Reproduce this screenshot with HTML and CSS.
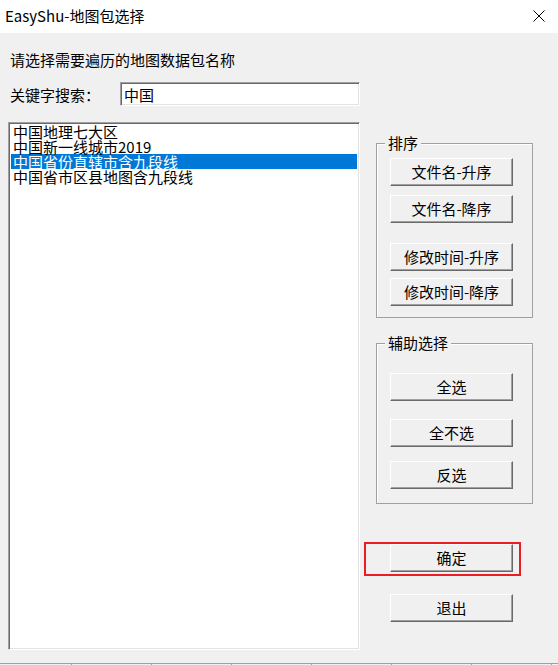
FILE: index.html
```html
<!DOCTYPE html>
<html lang="zh-CN">
<head>
    <meta charset="UTF-8">
    <meta name="viewport" content="width=device-width, initial-scale=1.0">
    <title>EasyShu-地图包选择</title>
    <link rel="stylesheet" href="styles.css">
</head>
<body>

    <div class="window">
        <div class="titlebar">
            <span class="title-text">EasyShu-地图包选择</span>
            <svg class="close-icon" width="12" height="12" viewBox="0 0 12 12">
                <path d="M0.5 0.5 L11.5 11.5 M11.5 0.5 L0.5 11.5" stroke="#000" stroke-width="1" fill="none"/>
            </svg>
        </div>

        <div class="content">
            <div class="prompt">请选择需要遍历的地图数据包名称</div>

            <div class="search-row">
                <label for="keyword" class="search-label">关键字搜索：</label>
                <input type="text" id="keyword" class="search-input" value="中国">
            </div>

            <div class="main-row">
                <ul class="listbox" id="mapList">
                    <li>中国地理七大区</li>
                    <li>中国新一线城市2019</li>
                    <li class="selected">中国省份直辖市含九段线</li>
                    <li>中国省市区县地图含九段线</li>
                </ul>

                <div class="side">
                    <div class="group group-sort">
                        <span class="group-title">排序</span>
                        <button class="btn">文件名-升序</button>
                        <button class="btn gap-9">文件名-降序</button>
                        <button class="btn gap-20">修改时间-升序</button>
                        <button class="btn gap-7">修改时间-降序</button>
                    </div>

                    <div class="group group-help">
                        <span class="group-title">辅助选择</span>
                        <button class="btn">全选</button>
                        <button class="btn gap-18">全不选</button>
                        <button class="btn gap-14">反选</button>
                    </div>

                    <div class="confirm-wrap">
                        <button class="btn">确定</button>
                    </div>

                    <button class="btn btn-exit">退出</button>
                </div>
            </div>
        </div>

        <div class="statusbar">
            <span class="seg seg-first"></span>
            <span class="seg"></span>
            <span class="seg"></span>
            <span class="seg"></span>
            <span class="seg"></span>
            <span class="seg"></span>
            <span class="seg"></span>
        </div>
    </div>

</body>
</html>
```

FILE: styles.css
```css
* {
    box-sizing: border-box;
}
body {
    margin: 0;
    font-family: "Noto Sans CJK SC", "Liberation Sans", sans-serif;
    font-size: 15px;
    color: #000;
    background-color: #f0f0f0;
    overflow: hidden;
}
.window {
    width: 558px;
    height: 665px;
    display: flex;
    flex-direction: column;
}
.titlebar {
    height: 33px;
    background-color: #fff;
    display: flex;
    align-items: center;
    justify-content: space-between;
    padding: 0 13px 2px 5px;
    flex-shrink: 0;
}
.title-text {
    font-size: 15px;
}
.content {
    flex: 1;
    display: flex;
    flex-direction: column;
    padding-top: 17px;
}
.prompt {
    line-height: 20px;
    height: 20px;
    padding-left: 10px;
}
.search-row {
    display: flex;
    align-items: center;
    margin-top: 12px;
    height: 24px;
}
.search-label {
    width: 120px;
    padding-left: 10px;
}
.search-input {
    width: 240px;
    height: 24px;
    font-family: inherit;
    font-size: 15px;
    padding: 0 3px;
    border: 1px solid;
    border-color: #a0a0a0 #fff #fff #a0a0a0;
    box-shadow: inset 1px 1px 0 #696969, inset -1px -1px 0 #e3e3e3;
    background: #fff;
    outline: none;
}
.main-row {
    display: flex;
    margin-top: 16px;
}
.listbox {
    list-style: none;
    margin: 0 0 0 8px;
    padding: 1px 2px;
    width: 352px;
    height: 528px;
    background: #fff;
    border: 1px solid;
    border-color: #a0a0a0 #fff #fff #a0a0a0;
    box-shadow: inset 1px 1px 0 #696969, inset -1px -1px 0 #e3e3e3;
}
.listbox li {
    height: 15px;
    line-height: 15px;
    padding-left: 2px;
    font-size: 15px;
    white-space: nowrap;
}
.listbox li.selected {
    background-color: #0078d7;
    color: #fff;
}
.side {
    display: flex;
    flex-direction: column;
    margin-left: 4px;
}
.group {
    position: relative;
    margin-left: 12px;
    width: 157px;
    border: 1px solid #a0a0a0;
    box-shadow: inset 1px 1px 0 #fff;
    padding-left: 13px;
    display: flex;
    flex-direction: column;
}
.group-title {
    position: absolute;
    top: -11px;
    left: 8px;
    padding: 0 3px;
    background-color: #f0f0f0;
    line-height: 20px;
}
.group-sort {
    margin-top: 21px;
    height: 175px;
    padding-top: 14px;
}
.group-help {
    margin-top: 25px;
    height: 161px;
    padding-top: 29px;
}
.btn {
    width: 123px;
    height: 28px;
    font-family: inherit;
    font-size: 15px;
    color: #000;
    background-color: #f0f0f0;
    border: 1px solid;
    border-color: #fff #696969 #696969 #fff;
    box-shadow: inset -1px -1px 0 #a0a0a0;
    padding: 0 0 1px 0;
    cursor: pointer;
}
.gap-7 { margin-top: 7px; }
.gap-9 { margin-top: 9px; }
.gap-14 { margin-top: 14px; }
.gap-18 { margin-top: 18px; }
.gap-20 { margin-top: 20px; }
.confirm-wrap {
    margin-top: 38px;
    width: 157px;
    height: 34px;
    border: 2px solid #ed1c24;
    padding: 0 0 0 24px;
}
.btn-exit {
    margin-top: 18px;
    margin-left: 26px;
}
.statusbar {
    height: 2px;
    margin-top: auto;
    border-top: 1px solid #a0a0a0;
    display: flex;
    flex-shrink: 0;
}
.seg {
    width: 80px;
    height: 1px;
    border-right: 1px solid #a0a0a0;
}
.seg-first {
    width: 72px;
}
```
